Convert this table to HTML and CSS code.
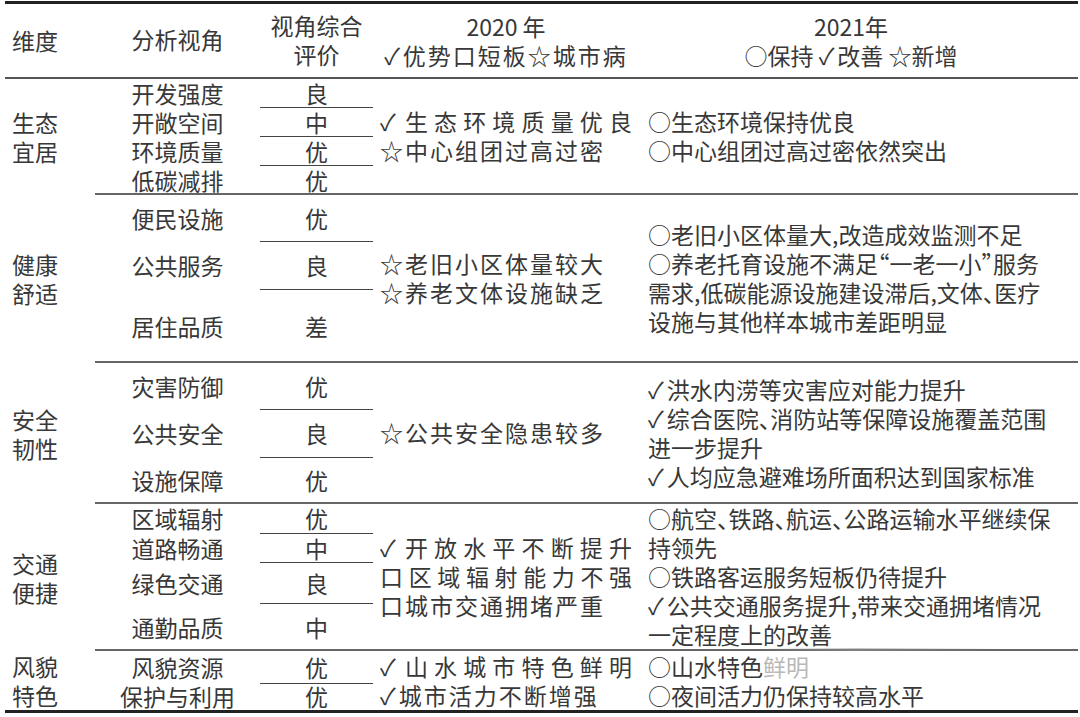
FILE: index.html
```html
<!DOCTYPE html>
<html lang="zh-CN">
<head>
<meta charset="utf-8">
<title>城市体检评价对比</title>
<link rel="stylesheet" href="styles.css">
</head>
<body>
<table class="tbl">
  <colgroup><col class="c1"><col class="c2"><col class="c3"><col class="c4"><col class="c5"></colgroup>
  <thead>
    <tr class="hd">
      <th class="dim">维度</th>
      <th class="ang">分析视角</th>
      <th class="ev">视角综合<br>评价</th>
      <th class="y20">2020 年<br><span class="leg"><span class="ck">✓</span>优势口短板☆城市病</span></th>
      <th class="y21">2021年<br>○保持 <span class="ck">✓</span>改善 ☆新增</th>
    </tr>
  </thead>
  <tbody>
    <tr class="h29">
      <td class="dim" rowspan="4">生态<br>宜居</td>
      <td class="ang">开发强度</td><td class="ev sub">良</td>
      <td class="y20 end" rowspan="4"><div class="j"><span class="ck">✓</span>生态环境质量优良</div><div>☆中心组团过高过密</div></td>
      <td class="y21 end" rowspan="4">○生态环境保持优良<br>○中心组团过高过密依然突出</td>
    </tr>
    <tr class="h29"><td class="ang">开敞空间</td><td class="ev sub">中</td></tr>
    <tr class="h29"><td class="ang">环境质量</td><td class="ev sub">优</td></tr>
    <tr class="h29"><td class="ang end">低碳减排</td><td class="ev end">优</td></tr>

    <tr class="h47">
      <td class="dim" rowspan="3">健康<br>舒适</td>
      <td class="ang">便民设施</td><td class="ev sub">优</td>
      <td class="y20 end" rowspan="3"><div>☆老旧小区体量较大</div><div>☆养老文体设施缺乏</div></td>
      <td class="y21 end" rowspan="3">○老旧小区体量大,改造成效监测不足<br>○养老托育设施不满足“一老一小”服务<br>需求,低碳能源设施建设滞后,文体、医疗<br>设施与其他样本城市差距明显</td>
    </tr>
    <tr class="h48"><td class="ang">公共服务</td><td class="ev sub">良</td></tr>
    <tr class="h73"><td class="ang end">居住品质</td><td class="ev end">差</td></tr>

    <tr class="h47">
      <td class="dim" rowspan="3">安全<br>韧性</td>
      <td class="ang">灾害防御</td><td class="ev sub">优</td>
      <td class="y20 end" rowspan="3"><div>☆公共安全隐患较多</div></td>
      <td class="y21 end" rowspan="3"><span class="ck">✓</span>洪水内涝等灾害应对能力提升<br><span class="ck">✓</span>综合医院、消防站等保障设施覆盖范围<br>进一步提升<br><span class="ck">✓</span>人均应急避难场所面积达到国家标准</td>
    </tr>
    <tr class="h48"><td class="ang">公共安全</td><td class="ev sub">良</td></tr>
    <tr class="h46"><td class="ang end">设施保障</td><td class="ev end">优</td></tr>

    <tr class="h30">
      <td class="dim" rowspan="4">交通<br>便捷</td>
      <td class="ang">区域辐射</td><td class="ev sub">优</td>
      <td class="y20 end" rowspan="4"><div class="j"><span class="ck">✓</span>开放水平不断提升</div><div class="j">口区域辐射能力不强</div><div>口城市交通拥堵严重</div></td>
      <td class="y21 end" rowspan="4">○航空、铁路、航运、公路运输水平继续保<br>持领先<br>○铁路客运服务短板仍待提升<br><span class="ck">✓</span>公共交通服务提升,带来交通拥堵情况<br>一定程度上的改善</td>
    </tr>
    <tr class="h29"><td class="ang">道路畅通</td><td class="ev sub">中</td></tr>
    <tr class="h41"><td class="ang">绿色交通</td><td class="ev sub">良</td></tr>
    <tr class="h47"><td class="ang end">通勤品质</td><td class="ev end">中</td></tr>

    <tr class="h33">
      <td class="dim" rowspan="2">风貌<br>特色</td>
      <td class="ang">风貌资源</td><td class="ev sub">优</td>
      <td class="y20" rowspan="2"><div class="j"><span class="ck">✓</span>山水城市特色鲜明</div><div><span class="ck">✓</span>城市活力不断增强</div></td>
      <td class="y21 wmcell" rowspan="2">○山水特色<span class="wm">鲜明</span><br>○夜间活力仍保持较高水平<span class="smear" aria-hidden="true"></span></td>
    </tr>
    <tr class="h26"><td class="ang">保护与利用</td><td class="ev">优</td></tr>
  </tbody>
</table>
</body>
</html>
```

FILE: styles.css
```css
html, body {
  margin: 0;
  padding: 0;
  background: #ffffff;
}

body {
  font-family: "Noto Sans CJK SC", "Noto Sans", sans-serif;
  font-size: 23px;
  color: #383838;
}

.tbl {
  margin: 1px 0 0 5px;
  width: 1073px;
  table-layout: fixed;
  border-collapse: separate;
  border-spacing: 0;
  border-top: 3px solid #222;
  border-bottom: 3px solid #222;
}

.c1 { width: 90px; }
.c2 { width: 165px; }
.c3 { width: 113px; }
.c4 { width: 267px; }
.c5 { width: 438px; }

th, td {
  padding: 0;
  vertical-align: middle;
  font-weight: 400;
}

.hd { height: 75px; }
.hd th {
  border-bottom: 2px solid #555;
  line-height: 29px;
  text-align: center;
}

.h26 { height: 26px; }
.h29 { height: 29px; }
.h30 { height: 30px; }
.h33 { height: 33px; }
.h41 { height: 41px; }
.h46 { height: 46px; }
.h47 { height: 47px; }
.h48 { height: 48px; }
.h73 { height: 73px; }

.dim {
  text-align: left;
  padding-left: 7px;
  line-height: 29px;
}
.hd th.dim { text-align: left; }

.ang, .ev {
  text-align: center;
  line-height: 24px;
  white-space: nowrap;
  padding-bottom: 2px;
}
.ev.sub { padding-bottom: 1px; }
.ang.end, .ev.end { padding-bottom: 0; }

.sub { border-bottom: 1px solid #444; }
.end { border-bottom: 2px solid #666; }

.y20 {
  padding: 0 8px 0 7px;
  letter-spacing: 2px;
  line-height: 29px;
  white-space: nowrap;
}
.hd th.y20 { letter-spacing: 0; }
.leg { letter-spacing: 2px; }

.j {
  text-align: justify;
  text-align-last: justify;
  letter-spacing: 0;
}

.ck {
  letter-spacing: 3px;
}

.y21 {
  padding-left: 8px;
  line-height: 29px;
  white-space: nowrap;
  font-feature-settings: "halt";
}
.hd th.y21 {
  padding-right: 24px;
  padding-left: 8px;
}

.wmcell { position: relative; }
.wm { color: #b8b8b8; }
.smear {
  position: absolute;
  left: 120px;
  top: -3px;
  width: 240px;
  height: 3px;
  background: linear-gradient(to right, rgba(150,150,150,0), rgba(150,150,150,0.55) 40%, rgba(150,150,150,0));
}
```
